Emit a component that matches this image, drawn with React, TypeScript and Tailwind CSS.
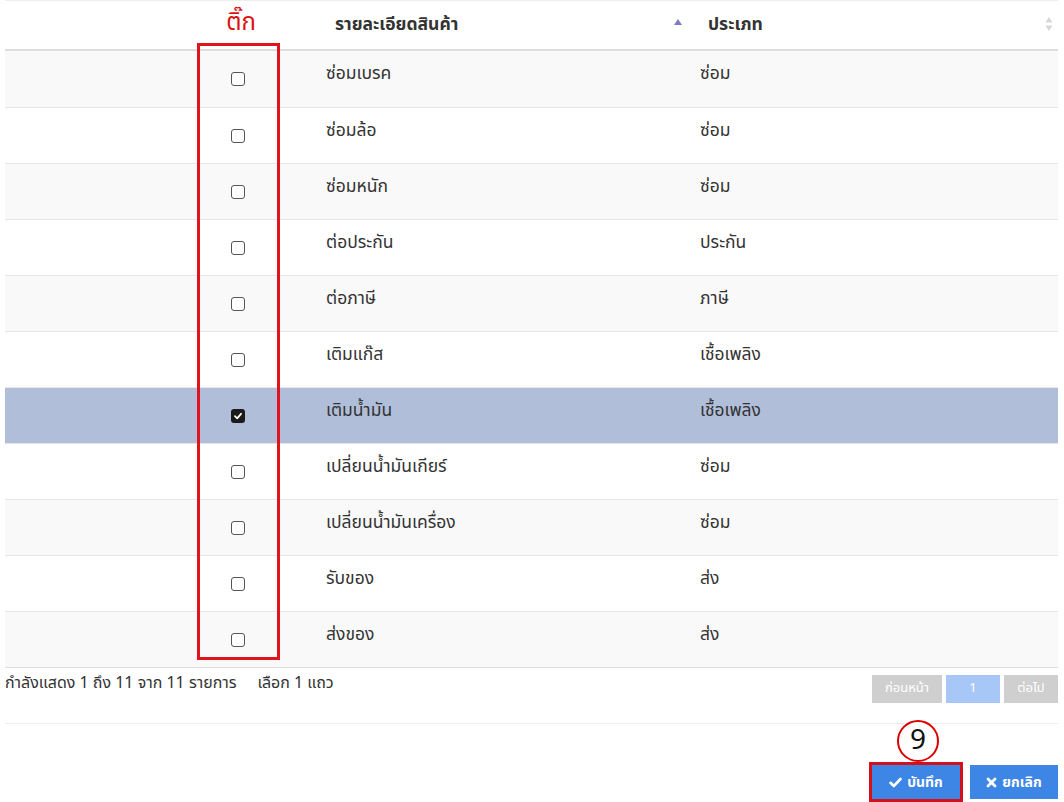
import React from "react";

const rows = [
  ["ซ่อมเบรค", "ซ่อม"],
  ["ซ่อมล้อ", "ซ่อม"],
  ["ซ่อมหนัก", "ซ่อม"],
  ["ต่อประกัน", "ประกัน"],
  ["ต่อภาษี", "ภาษี"],
  ["เติมแก๊ส", "เชื้อเพลิง"],
  ["เติมน้ำมัน", "เชื้อเพลิง"],
  ["เปลี่ยนน้ำมันเกียร์", "ซ่อม"],
  ["เปลี่ยนน้ำมันเครื่อง", "ซ่อม"],
  ["รับของ", "ส่ง"],
  ["ส่งของ", "ส่ง"],
];

const font = {
  fontFamily: '"Noto Sans Thai", "Noto Sans", "DejaVu Sans", sans-serif',
};

function Box({ checked }: { checked: boolean }) {
  if (checked)
    return (
      <div className="w-[14px] h-[14px] rounded-[3px] bg-[#1a1a1a] flex items-center justify-center">
        <svg width="10" height="10" viewBox="0 0 10 10">
          <path d="M2 5.2 L4.2 7.3 L8 2.8" stroke="#fff" strokeWidth="1.8" fill="none" strokeLinecap="round" strokeLinejoin="round" />
        </svg>
      </div>
    );
  return <div className="w-[14px] h-[14px] rounded-[3px] border border-[#555] bg-white" />;
}

export default function App() {
  return (
    <div className="w-[1064px] h-[802px] bg-white text-[#333] relative overflow-hidden" style={font}>
      <div className="ml-[5px] w-[1053px] border-t border-[#eee]">
        {/* header */}
        <div className="grid grid-cols-[193px_80px_412px_1fr] h-[50px] border-b-2 border-[#ddd] items-center">
          <div />
          <div className="flex justify-center">
            <span className="text-[24px] text-[#d11] -mt-[4px] ml-[6px]">ติ๊ก</span>
          </div>
          <div className="relative pl-[57px] font-bold text-[17.5px] text-[#333]">
            รายละเอียดสินค้า
            <svg className="absolute right-[8px] top-[7px]" width="8" height="6" viewBox="0 0 8 6">
              <path d="M4 0 L8 6 L0 6 Z" fill="#7b7bc8" />
            </svg>
          </div>
          <div className="relative pl-[18px] font-bold text-[17.5px]">
            ประเภท
            <svg className="absolute right-[5px] top-[4px]" width="8" height="16" viewBox="0 0 8 16">
              <path d="M4 1 L7.5 6.5 L0.5 6.5 Z" fill="#d6d6d6" />
              <path d="M4 15 L7.5 9.5 L0.5 9.5 Z" fill="#d6d6d6" />
            </svg>
          </div>
        </div>
        {rows.map(([a, b], i) => {
          const sel = i === 6;
          const bg = sel ? "bg-[#b0bed9]" : i % 2 === 0 ? "bg-[#f9f9f9]" : "bg-white";
          return (
            <div
              key={i}
              className={`grid grid-cols-[193px_80px_412px_1fr] h-[56px] items-center text-[17.5px] ${bg} ${i > 0 ? "border-t border-[#e6e6e6]" : ""}`}
            >
              <div />
              <div className="flex justify-center">
                <Box checked={sel} />
              </div>
              <div className="pl-[48px] -mt-[9px]">{a}</div>
              <div className="pl-[10px] -mt-[9px]">{b}</div>
            </div>
          );
        })}
        <div className="border-t border-[#ddd]" />
      </div>

      {/* footer info */}
      <div className="flex items-start justify-between ml-[5px] w-[1053px] mt-[6px] h-[50px] border-b border-[#eee]">
        <div className="text-[16px] text-[#333] whitespace-pre -mt-[3px]">กำลังแสดง 1 ถึง 11 จาก 11 รายการ     เลือก 1 แถว</div>
        <div className="flex gap-[4px] mt-[1px]">
          <div className="w-[70px] h-[28px] bg-[#cfcfcf] text-white text-[13px] flex items-center justify-center">ก่อนหน้า</div>
          <div className="w-[54px] h-[28px] bg-[#a7c7f7] text-white text-[13px] flex items-center justify-center">1</div>
          <div className="w-[54px] h-[28px] bg-[#cfcfcf] text-white text-[13px] flex items-center justify-center">ต่อไป</div>
        </div>
      </div>

      {/* buttons */}
      <div className="flex justify-end gap-[10px] mr-[6px] mt-[41px]">
        <div className="relative">
          <div className="absolute left-[25px] -top-[45px] w-[42px] h-[42px] rounded-full border-2 border-[#d00] bg-white flex items-center justify-center text-[28px] text-[#111] leading-none">
            9
          </div>
          <div className="border-[3px] border-[#d4101a] p-0 -m-[3px]">
            <div className="w-[88px] h-[34px] bg-[#3d86e6] text-white text-[14px] font-bold flex items-center justify-center gap-[5px]">
              <svg width="13" height="11" viewBox="0 0 13 11">
                <path d="M1.5 5.8 L4.8 9 L11.5 2" stroke="#fff" strokeWidth="2.6" fill="none" strokeLinecap="round" strokeLinejoin="round" />
              </svg>
              บันทึก
            </div>
          </div>
        </div>
        <div className="w-[88px] h-[34px] bg-[#3d86e6] text-white text-[14px] font-bold flex items-center justify-center gap-[5px]">
          <svg width="11" height="11" viewBox="0 0 11 11">
            <path d="M2 2 L9 9 M9 2 L2 9" stroke="#fff" strokeWidth="2.8" strokeLinecap="round" />
          </svg>
          ยกเลิก
        </div>
      </div>

      {/* red highlight around checkbox column */}
      <div className="absolute left-[197px] top-[43px] w-[83px] h-[617px] border-[3px] border-[#e0141c] pointer-events-none" />
    </div>
  );
}
